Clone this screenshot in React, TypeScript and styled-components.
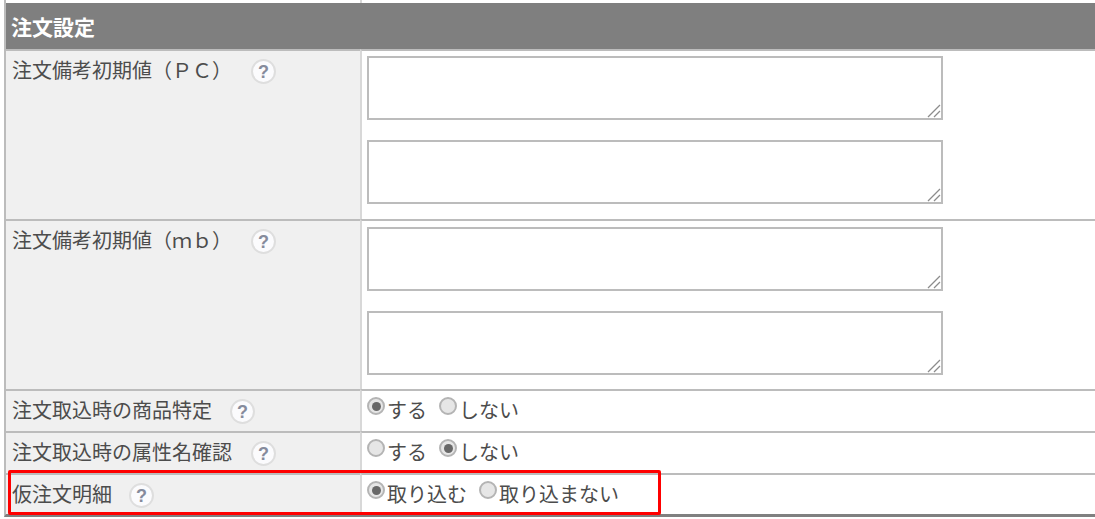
import { Fragment } from "react"
import styled, { createGlobalStyle } from "styled-components"

const GlobalStyle = createGlobalStyle`
html, body {
    margin: 0;
    padding: 0;
    background: #fff;
    overflow: hidden;
}
`

const Pagina = styled.div`
position: relative;
width: 1095px;
height: 519px;
overflow: hidden;
font-family: "Noto Sans CJK JP", "Liberation Sans", sans-serif;
color: #4c4c4c;
`

const Tabela = styled.div`
margin-left: 4px;
border-left: 2px solid #bcbcbc;
border-bottom: 3px solid #808080;
display: grid;
grid-template-columns: 354px 1fr;
`

const FaixaTopo = styled.div`
grid-column: 1 / 3;
height: 3px;
margin-left: 354px;
border-left: 2px solid #d8d8d8;
`

const Cabecalho = styled.div`
grid-column: 1 / 3;
height: 46px;
padding-left: 5px;
display: flex;
align-items: center;
background: #7f7f7f;
color: #fff;
font-size: 21px;
font-weight: 700;
`

const Rotulo = styled.div<{ $altura: number }>`
height: ${props => props.$altura}px;
box-sizing: border-box;
padding: 6px 0 0 6px;
display: flex;
align-items: flex-start;
background: #f0f0f0;
border-top: 2px solid #bcbcbc;
font-size: 20px;
line-height: 26px;
white-space: nowrap;
`

const Valor = styled.div`
box-sizing: border-box;
border-top: 2px solid #bcbcbc;
border-left: 2px solid #d8d8d8;
`

const ValorAreas = styled(Valor)<{ $topo: number }>`
padding: ${props => props.$topo}px 0 0 5px;
display: flex;
flex-direction: column;
gap: 20px;
`

const ValorOpcoes = styled(Valor)`
padding: 6px 0 0 5px;
display: flex;
align-items: flex-start;
font-size: 20px;
line-height: 26px;
`

const CaixaTexto = styled.div`
position: relative;
width: 576px;
height: 64px;
`

const AreaTexto = styled.textarea`
display: block;
width: 100%;
height: 100%;
box-sizing: border-box;
margin: 0;
padding: 0;
border: 2px solid #bcbcbc;
background: #fff;
outline: none;
resize: none;
`

const Alca = styled.svg`
position: absolute;
right: 2px;
bottom: 2px;
width: 14px;
height: 14px;
`

const Ajuda = styled.span<{ $margem: number }>`
width: 21px;
height: 21px;
margin: 4px 0 0 ${props => props.$margem}px;
flex: none;
display: flex;
align-items: center;
justify-content: center;
border-radius: 50%;
background: #fbfbfd;
box-shadow: 0 0 0 2px #dedede;
color: #868b9c;
font-family: "Liberation Sans", sans-serif;
font-size: 18px;
font-weight: 700;
`

const Opcao = styled.label`
display: flex;
align-items: flex-start;
margin-right: 12px;
`

const Radio = styled.span<{ $marcado?: boolean }>`
width: 18px;
height: 18px;
margin: 0 2px 0 0;
box-sizing: border-box;
flex: none;
display: flex;
align-items: center;
justify-content: center;
border-radius: 50%;
border: 2px solid #b4b4b4;
background: #e6e6e6;
&:after {
    content: '';
    width: 9px;
    height: 9px;
    border-radius: 50%;
    background: ${props => props.$marcado ? "#686868" : "transparent"};
}
`

const Destaque = styled.div`
position: absolute;
left: 8px;
top: 470px;
width: 653px;
height: 45px;
box-sizing: border-box;
border: 3px solid #f00;
border-radius: 2px;
`

interface LinhaOpcoes {
    rotulo: string,
    margem: number,
    altura: number,
    opcoes: string[],
    marcada: number,
}

const linhasOpcoes: LinhaOpcoes[] = [
    { rotulo: "注文取込時の商品特定", margem: 20, altura: 42, opcoes: ["する", "しない"], marcada: 0 },
    { rotulo: "注文取込時の属性名確認", margem: 21, altura: 42, opcoes: ["する", "しない"], marcada: 1 },
    { rotulo: "仮注文明細", margem: 19, altura: 41, opcoes: ["取り込む", "取り込まない"], marcada: 0 },
]

function CampoTexto() {
    return (
        <CaixaTexto>
            <AreaTexto />
            <Alca viewBox="0 0 14 14">
                <path d="M1 13 L13 1 M7 13 L13 7" stroke="#8c8c8c" strokeWidth="1.3" fill="none" />
            </Alca>
        </CaixaTexto>
    )
}

export default function App() {
    return (
        <Pagina>
            <GlobalStyle />
            <Tabela>
                <FaixaTopo />
                <Cabecalho>注文設定</Cabecalho>

                <Rotulo $altura={170}>注文備考初期値（ＰＣ）<Ajuda $margem={21}>?</Ajuda></Rotulo>
                <ValorAreas $topo={5}>
                    <CampoTexto />
                    <CampoTexto />
                </ValorAreas>

                <Rotulo $altura={170}>注文備考初期値（ｍｂ）<Ajuda $margem={21}>?</Ajuda></Rotulo>
                <ValorAreas $topo={6}>
                    <CampoTexto />
                    <CampoTexto />
                </ValorAreas>

                {linhasOpcoes.map(linha => (
                    <Fragment key={linha.rotulo}>
                        <Rotulo $altura={linha.altura}>
                            {linha.rotulo}<Ajuda $margem={linha.margem}>?</Ajuda>
                        </Rotulo>
                        <ValorOpcoes>
                            {linha.opcoes.map((opcao, i) => (
                                <Opcao key={opcao}>
                                    <Radio $marcado={i === linha.marcada} />{opcao}
                                </Opcao>
                            ))}
                        </ValorOpcoes>
                    </Fragment>
                ))}
            </Tabela>
            <Destaque />
        </Pagina>
    )
}
